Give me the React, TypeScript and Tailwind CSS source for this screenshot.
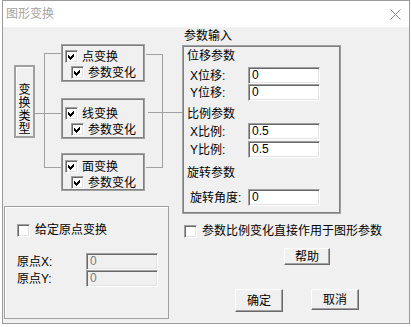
import React from 'react';

const FONT = "font-['Liberation_Sans','Noto_Sans_CJK_SC',sans-serif]";

function CheckBox({ checked }: { checked?: boolean }) {
  return (
    <span className="relative inline-block h-[13px] w-[13px] shrink-0 border border-t-[#a0a0a0] border-l-[#a0a0a0] border-r-white border-b-white bg-white shadow-[inset_1px_1px_0_#696969,inset_-1px_-1px_0_#e3e3e3]">
      {checked && (
        <svg className="absolute -left-px -top-px" width="13" height="13" viewBox="0 0 13 13" shapeRendering="crispEdges">
          <polygon points="3,5 5,7 9,3 9,6 5,10 3,8" fill="#000" />
        </svg>
      )}
    </span>
  );
}

function Field({ value, disabled, className = '' }: { value: string; disabled?: boolean; className?: string }) {
  return (
    <div
      className={`h-[17px] w-[72px] shrink-0 border border-t-[#a0a0a0] border-l-[#a0a0a0] border-r-white border-b-white pl-[3px] leading-[15px] shadow-[inset_1px_1px_0_#696969,inset_-1px_-1px_0_#e3e3e3] ${
        disabled ? 'bg-[#f0f0f0] text-[#7a7a7a]' : 'bg-white text-black'
      } ${className}`}
    >
      {value}
    </div>
  );
}

function Button({ label, className = '' }: { label: string; className?: string }) {
  return (
    <div
      className={`flex shrink-0 items-center justify-center border border-t-white border-l-white border-r-[#696969] border-b-[#696969] bg-[#f0f0f0] shadow-[inset_-1px_-1px_0_#a0a0a0] ${className}`}
    >
      {label}
    </div>
  );
}

function CheckGroup({ title, className = '' }: { title: string; className?: string }) {
  return (
    <div className={`flex w-[84px] flex-col border border-[#a0a0a0] shadow-[inset_0_0_0_1px_#808080] ${className}`}>
      <div className="ml-[3px] flex h-[13px] items-center gap-[4px]">
        <CheckBox checked />
        <span>{title}</span>
      </div>
      <div className="ml-[9px] mt-[3px] flex h-[13px] items-center gap-[4px]">
        <CheckBox checked />
        <span>参数变化</span>
      </div>
    </div>
  );
}

function ParamRow({ label, value, className = '' }: { label: string; value: string; className?: string }) {
  return (
    <div className={`flex items-center ${className}`}>
      <span className="w-[65px] shrink-0 pl-[7px]">{label}</span>
      <Field value={value} />
    </div>
  );
}

export default function App() {
  return (
    <div className={`${FONT} h-[327px] w-[411px] overflow-hidden bg-white text-[12px] leading-[14px] text-black`}>
      <div className="ml-[2px] flex h-[324px] w-[408px] flex-col border border-[#9b9b9b] bg-[#f0f0f0]">
        {/* title bar */}
        <div className="flex h-[26px] shrink-0 items-center justify-between bg-white pl-[3px] pr-[8px]">
          <span className="text-[#a3a3a3]">图形变换</span>
          <svg width="11" height="11" viewBox="0 0 11 11">
            <path d="M0.5 0.5 L10.5 10.5 M10.5 0.5 L0.5 10.5" stroke="#8a8a8a" strokeWidth="1" />
          </svg>
        </div>

        <div className="flex flex-1">
          {/* left column */}
          <div className="ml-px flex w-[178px] shrink-0 flex-col">
            <div className="relative mt-[17px] flex h-[147px] items-start">
              <svg className="absolute left-0 top-0 overflow-visible" width="178" height="147">
                <g stroke="#a0a0a0" strokeWidth="1" fill="none">
                  <path d="M40.5 9.5 V123.5 M40 9.5 H58 M31 69.5 H58 M40 123.5 H58" />
                  <path d="M158.5 10 V123 M142 10.5 H159 M144 68.5 H178 M142 123.5 H159" />
                </g>
              </svg>
              <div className="relative ml-[10px] mt-[21px] flex h-[73px] w-[21px] flex-col items-center border-2 border-[#a0a0a0] bg-[#f0f0f0] pt-[17px] leading-[13px] shadow-[inset_1px_1px_0_#fff]">
                <span>变</span>
                <span>换</span>
                <span>类</span>
                <span>型</span>
              </div>
              <div className="relative ml-[26px] flex flex-col">
                <CheckGroup title="点变换" className="h-[38px] pt-[5px]" />
                <CheckGroup title="线变换" className="mt-[16px] h-[41px] pt-[8px]" />
                <CheckGroup title="面变换" className="mt-[14px] h-[38px] pt-[6px]" />
              </div>
            </div>

            <div className="mt-[15px] flex h-[113px] w-[165px] flex-col border border-[#a0a0a0] shadow-[inset_1px_1px_0_#fff]">
              <div className="ml-[12px] mt-[16px] flex items-center gap-[5px]">
                <CheckBox />
                <span>给定原点变换</span>
              </div>
              <div className="mt-[16px] flex items-center">
                <span className="w-[81px] shrink-0 pl-[12px]">原点X:</span>
                <Field value="0" disabled />
              </div>
              <div className="flex items-center">
                <span className="w-[81px] shrink-0 pl-[12px]">原点Y:</span>
                <Field value="0" disabled />
              </div>
            </div>
          </div>

          {/* right column */}
          <div className="flex flex-1 flex-col">
            <span className="mt-[2px] pl-[2px]">参数输入</span>
            <div className="mt-[2px] flex h-[169px] w-[159px] flex-col border border-[#a0a0a0] shadow-[inset_0_0_0_1px_#808080]">
              <span className="mt-[3px] pl-[4px]">位移参数</span>
              <ParamRow label="X位移:" value="0" className="mt-[4px]" />
              <ParamRow label="Y位移:" value="0" />
              <span className="mt-[6px] pl-[4px]">比例参数</span>
              <ParamRow label="X比例:" value="0.5" className="mt-[2px]" />
              <ParamRow label="Y比例:" value="0.5" className="mt-[1px]" />
              <span className="mt-[8px] pl-[4px]">旋转参数</span>
              <ParamRow label="旋转角度:" value="0" className="mt-[9px]" />
            </div>

            <div className="ml-[2px] mt-[10px] flex items-center gap-[5px]">
              <CheckBox />
              <span>参数比例变化直接作用于图形参数</span>
            </div>

            <Button label="帮助" className="ml-[102px] mt-[10px] h-[17px] w-[46px]" />

            <div className="ml-[53px] mt-[24px] flex items-start gap-[28px]">
              <Button label="确定" className="h-[23px] w-[48px]" />
              <Button label="取消" className="h-[21px] w-[48px]" />
            </div>
          </div>
        </div>
      </div>
    </div>
  );
}
